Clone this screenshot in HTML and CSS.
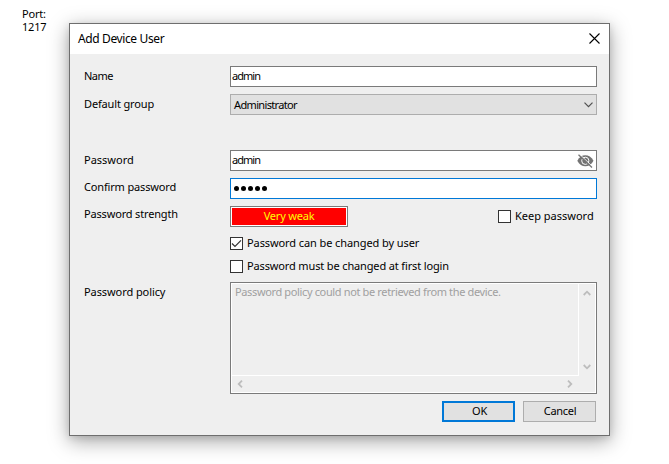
FILE: index.html
```
<!DOCTYPE html>
<html lang="en">
<head>
<meta charset="utf-8">
<title>Add Device User</title>
<link rel="stylesheet" href="styles.css">
</head>
<body>
<div class="port">Port:<br>1217</div>
<section class="dialog">
  <header class="titlebar">
    <h1 class="title">Add Device User</h1>
    <svg class="close" width="11" height="11" viewBox="0 0 11 11"><path d="M.5 .5l10 10M10.5 .5l-10 10"/></svg>
  </header>
  <form class="body">
    <div class="row"><span class="label t-name">Name</span><div class="field"><span class="t-admin">admin</span></div></div>
    <div class="row"><span class="label t-group">Default group</span><div class="field select"><span class="t-administrator">Administrator</span><svg class="chevron" width="9" height="6" viewBox="0 0 9 6"><path d="M.5 .7l4 4 4-4"/></svg></div></div>
    <div class="row"></div>
    <div class="row"><span class="label t-password">Password</span><div class="field"><span class="t-admin">admin</span>
      <svg class="eye" width="17" height="14" viewBox="0 0 17 14"><path class="eye-fill" d="M.3 6.8C2.3 3 5.200 1.300 8.300 1.300s6.200 1.700 8.200 5.500c-2 3.700-5 5.500-8.200 5.500S2.300 10.500.3 6.800z"/><circle class="eye-ring" cx="8.300" cy="6.800" r="3.600"/><circle class="eye-fill" cx="8.300" cy="6.800" r="2"/><path class="slash-gap" d="M2.500 .2l13.200 12.600"/><path class="slash" d="M1.500 .7l13.500 12.800"/></svg></div></div>
    <div class="row"><span class="label t-confirm up1">Confirm password</span><div class="field focused"><span class="dots"><i></i><i></i><i></i><i></i><i></i></span></div></div>
    <div class="row"><span class="label t-strength up2">Password strength</span><div class="meter"><span class="t-weak">Very weak</span></div>
      <div class="check keep"><span class="box"></span><span class="check-text">Keep password</span></div></div>
    <div class="check option"><span class="box"><svg width="11" height="11" viewBox="0 0 11 11"><path d="M1 5.500l3 3 6-6.200"/></svg></span><span class="check-text t-can">Password can be changed by user</span></div>
    <div class="check option"><span class="box"></span><span class="check-text t-must">Password must be changed at first login</span></div>
    <div class="row policy-row"><span class="label t-policy">Password policy</span>
      <div class="policy">
        <div class="policy-text"><span class="t-info">Password policy could not be retrieved from the device.</span></div>
        <div class="vbar"><svg width="8" height="6" viewBox="0 0 8 6"><path d="M.7 5L4 1.700 7.300 5"/></svg><svg width="8" height="6" viewBox="0 0 8 6"><path d="M.7 1L4 4.300 7.300 1"/></svg></div>
        <div class="hbar"><svg width="6" height="8" viewBox="0 0 6 8"><path d="M5 .7L1.700 4 5 7.300"/></svg><svg width="6" height="8" viewBox="0 0 6 8"><path d="M1 .7L4.300 4 1 7.300"/></svg></div>
      </div></div>
    <div class="actions"><button type="button" class="btn primary"><span class="t-ok">OK</span></button><button type="button" class="btn"><span class="t-cancel">Cancel</span></button></div>
  </form>
</section>
</body>
</html>
```
FILE: styles.css
```
* { box-sizing: border-box; }
body {
  margin: 0;
  width: 669px;
  height: 464px;
  overflow: hidden;
  background: #fff;
  color: #000;
  font: 11px/13px "Noto Sans", sans-serif;
  display: flex;
  align-items: flex-start;
  white-space: nowrap;
}
svg { display: block; fill: none; flex: none; }
.port { width: 69px; padding: 7px 0 0 22px; letter-spacing: -.2px; }
.dialog {
  width: 541px;
  height: 413px;
  margin-top: 23px;
  border: 1px solid #6e6e6e;
  background: #efefef;
  box-shadow: 0 5px 19px rgba(0, 0, 0, .36), 0 2px 7px rgba(0, 0, 0, .1);
}
.titlebar {
  height: 30px;
  padding: 0 9px 0 8px;
  display: flex;
  align-items: center;
  justify-content: space-between;
  background: #fff;
}
.title { margin: 0; font-size: 12px; font-weight: 400; line-height: 16px; letter-spacing: -.38px; }
.close { stroke: #000; stroke-width: 1.1; margin-top: -2px; }
.body { margin: 0; padding: 12px 12px 0 14px; display: flex; flex-direction: column; gap: 7px; }
.row { display: flex; height: 21px; }
.label { width: 146px; flex: none; line-height: 19px; }
.up1 { margin-top: -1px; }
.up2 { margin-top: -2px; }
.field {
  flex: 1;
  border: 1px solid #7a7a7a;
  background: #fff;
  padding: 0 2px 0 1px;
  display: flex;
  align-items: center;
  justify-content: space-between;
}
.field > span:not(.dots) { padding-bottom: 2px; }
.select { background: #e1e1e1; border-color: #adadad; padding: 0 3px; }
.field.select > .t-administrator { padding-bottom: 0; }
.chevron { stroke: #505050; stroke-width: 1.2; }
.eye-fill { fill: #747474; }
.eye-ring { stroke: #fff; stroke-width: 1; }
.slash-gap { stroke: #fff; stroke-width: 1; }
.slash { stroke: #747474; stroke-width: 1.300; }
.focused { border-color: #0078d7; }
.dots { display: flex; gap: 2px; padding: 0 0 1px 2px; }
.dots i { width: 5px; height: 5px; border-radius: 50%; background: #000; }
.meter {
  width: 118px;
  border: 1px solid #7a7a7a;
  background: #f00;
  box-shadow: inset 0 0 0 1px #fff;
  color: #ff0;
  text-align: center;
  line-height: 17px;
}
.check { display: flex; align-items: center; gap: 4px; height: 13px; }
.check-text { padding-bottom: 2px; }
.keep { margin: 4px 0 0 150px; }
.option { margin: 3px 0 0 146px; }
.box { width: 13px; height: 13px; border: 1px solid #333; background: #fff; flex: none; }
.box svg { stroke: #333; stroke-width: 1.200; }
.policy-row { height: 112px; margin-top: 2px; }
.policy {
  flex: 1;
  display: grid;
  grid-template-columns: 1fr 16px;
  grid-template-rows: 1fr 16px;
  border: 1px solid #7a7a7a;
  box-shadow: inset 0 0 0 1px #fff;
  padding: 1px;
}
.policy-text { border-right: 1px solid #fff; border-bottom: 1px solid #fff; padding: 1px 0 0 3px; color: #a0a0a0; }
.policy svg { stroke: #bdbdbd; stroke-width: 1.800; }
.vbar { display: flex; flex-direction: column; justify-content: space-between; align-items: center; padding: 6px 0 6px; }
.hbar { display: flex; justify-content: space-between; align-items: center; padding: 0 6px 0 5px; }
.actions { display: flex; justify-content: flex-end; gap: 8px; padding-right: 1px; }
.btn { width: 73px; height: 21px; padding: 0 0 2px; border: 1px solid #adadad; background: #e1e1e1; color: #000; font: inherit; }
.primary { border: 2px solid #0078d7; padding-left: 2px; }
.t-name { letter-spacing: -.5px; }
.t-group { letter-spacing: -.15px; }
.t-admin { letter-spacing: -.95px; }
.t-administrator { letter-spacing: -.65px; }
.t-confirm { letter-spacing: -.16px; }
.t-strength { letter-spacing: -.17px; }
.t-policy { letter-spacing: -.08px; }
.t-weak { letter-spacing: -.2px; }
.t-can { letter-spacing: -.09px; }
.t-must { letter-spacing: -.14px; }
.t-info { letter-spacing: -.36px; }
.t-ok, .t-cancel { letter-spacing: -.3px; }
.t-cancel { padding-left: 1px; }
```
